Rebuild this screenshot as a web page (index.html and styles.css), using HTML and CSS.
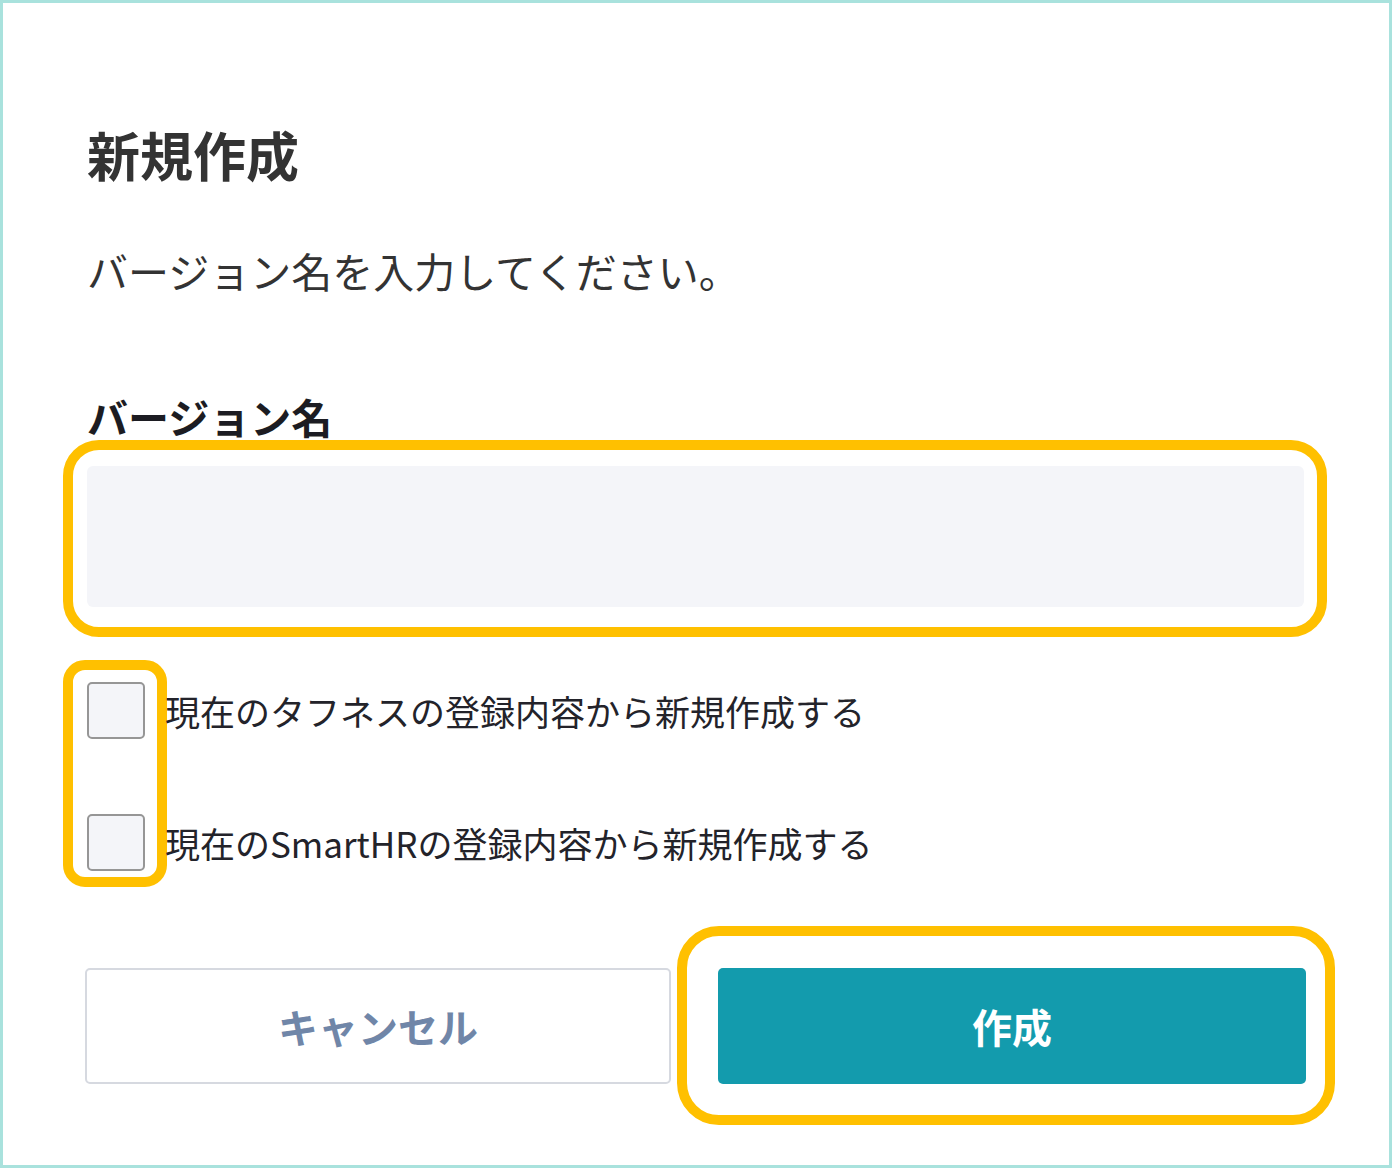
FILE: index.html
```html
<!DOCTYPE html>
<html lang="ja">
<head>
<meta charset="utf-8">
<title>新規作成</title>
<link rel="stylesheet" href="styles.css">
</head>
<body>
<div class="frame">
  <h1 class="title">新規作成</h1>
  <p class="lead">バージョン名を入力してください。</p>
  <div class="label">バージョン名</div>
  <div class="field">
    <input class="input" type="text" aria-label="バージョン名">
    <span class="hl hl-input"></span>
  </div>
  <div class="checks">
    <span class="hl hl-checks"></span>
    <label class="check">
      <span class="box"></span>
      <span class="check-text">現在のタフネスの登録内容から新規作成する</span>
    </label>
    <label class="check">
      <span class="box"></span>
      <span class="check-text">現在のSmartHRの登録内容から新規作成する</span>
    </label>
  </div>
  <div class="actions">
    <button class="btn btn-cancel" type="button">キャンセル</button>
    <div class="primary-wrap">
      <button class="btn btn-primary" type="button">作成</button>
      <span class="hl hl-primary"></span>
    </div>
  </div>
</div>
</body>
</html>
```

FILE: styles.css
```css
* { box-sizing: border-box; }
html, body { margin: 0; padding: 0; background: #fff; }
body {
  font-family: "Noto Sans CJK JP", "Noto Sans", sans-serif;
  color: #333;
}
.frame {
  width: 1392px;
  height: 1168px;
  border: 3px solid #a9e2dd;
  padding: 125px 0 0 84px;
}
.title {
  margin: 0;
  font-size: 53px;
  line-height: 52px;
  font-weight: 700;
  color: #333;
}
.lead {
  margin: 70px 0 0;
  font-size: 41px;
  line-height: 40px;
  color: #333;
  font-weight: 400;
}
.label {
  margin-top: 106px;
  font-size: 41px;
  line-height: 40px;
  font-weight: 700;
  color: #1c1c22;
}
.field {
  position: relative;
  margin-top: 30px;
  width: 1217px;
  height: 141px;
}
.input {
  display: block;
  width: 100%;
  height: 100%;
  border: none;
  border-radius: 6px;
  background: #f4f5f9;
  outline: none;
}
.hl {
  position: absolute;
  border: 10px solid #ffc000;
  pointer-events: none;
}
.hl-input {
  left: -24px;
  right: -23px;
  top: -26px;
  bottom: -30px;
  border-radius: 36px;
}
.checks {
  position: relative;
  margin-top: 75px;
  display: flex;
  flex-direction: column;
  gap: 75px;
}
.hl-checks {
  left: -24px;
  top: -22px;
  width: 104px;
  height: 227px;
  border-radius: 22px;
}
.check {
  position: relative;
  display: flex;
  align-items: center;
  height: 57px;
}
.box {
  width: 58px;
  height: 57px;
  border: 2px solid #969696;
  border-radius: 5px;
  background: #f4f5f9;
  flex: none;
}
.check-text {
  position: relative;
  margin-left: 20px;
  margin-top: 0;
  font-size: 35px;
  line-height: 40px;
  color: #23232a;
}
.actions {
  margin-top: 97px;
  margin-left: -2px;
  display: flex;
  gap: 47px;
}
.btn {
  height: 116px;
  border-radius: 5px;
  font-family: "Noto Sans CJK JP", "Noto Sans", sans-serif;
  font-size: 40px;
  font-weight: 700;
  cursor: pointer;
}
.btn-cancel {
  width: 586px;
  background: #fff;
  border: 2px solid #d6d9e0;
  color: #7086a8;
}
.primary-wrap {
  position: relative;
  width: 588px;
}
.btn-primary {
  width: 100%;
  border: none;
  background: #139bad;
  color: #fff;
}
.hl-primary {
  left: -41px;
  right: -29px;
  top: -42px;
  bottom: -41px;
  border-radius: 42px;
}
```
